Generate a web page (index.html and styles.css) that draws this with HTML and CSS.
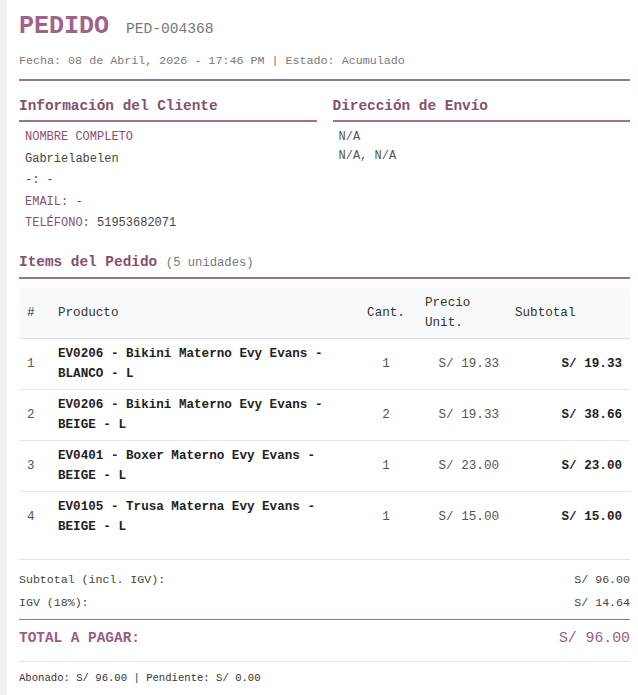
FILE: index.html
```html
<!DOCTYPE html>
<html lang="es">
<head>
<meta charset="utf-8">
<title>Pedido PED-004368</title>
<link rel="stylesheet" href="styles.css">
</head>
<body>
<div class="page">
  <header class="doc-header">
    <div class="title-row">
      <span class="title">PEDIDO</span>
      <span class="code">PED-004368</span>
    </div>
    <div class="meta">Fecha: 08 de Abril, 2026 - 17:46 PM | Estado: Acumulado</div>
  </header>

  <section class="two-cols">
    <div class="col">
      <h2 class="sec-title">Información del Cliente</h2>
      <div class="info">
        <div class="info-row label">NOMBRE COMPLETO</div>
        <div class="info-row">Gabrielabelen</div>
        <div class="info-row muted">-: -</div>
        <div class="info-row"><span class="label">EMAIL:</span> <span class="muted">-</span></div>
        <div class="info-row"><span class="label">TELÉFONO:</span> 51953682071</div>
      </div>
    </div>
    <div class="col">
      <h2 class="sec-title">Dirección de Envío</h2>
      <div class="addr">
        <div class="addr-row">N/A</div>
        <div class="addr-row">N/A, N/A</div>
      </div>
    </div>
  </section>

  <h2 class="sec-title items-title">Items del Pedido <span class="units">(5 unidades)</span></h2>

  <table class="items">
    <colgroup>
      <col class="c-num">
      <col class="c-prod">
      <col class="c-qty">
      <col class="c-price">
      <col class="c-sub">
    </colgroup>
    <thead>
      <tr>
        <th class="t-left">#</th>
        <th class="t-left">Producto</th>
        <th class="t-center">Cant.</th>
        <th class="t-left">Precio Unit.</th>
        <th class="t-left">Subtotal</th>
      </tr>
    </thead>
    <tbody>
      <tr>
        <td class="num">1</td>
        <td class="prod">EV0206 - Bikini Materno Evy Evans - BLANCO - L</td>
        <td class="qty">1</td>
        <td class="price">S/ 19.33</td>
        <td class="sub">S/ 19.33</td>
      </tr>
      <tr>
        <td class="num">2</td>
        <td class="prod">EV0206 - Bikini Materno Evy Evans - BEIGE - L</td>
        <td class="qty">2</td>
        <td class="price">S/ 19.33</td>
        <td class="sub">S/ 38.66</td>
      </tr>
      <tr>
        <td class="num">3</td>
        <td class="prod">EV0401 - Boxer Materno Evy Evans - BEIGE - L</td>
        <td class="qty">1</td>
        <td class="price">S/ 23.00</td>
        <td class="sub">S/ 23.00</td>
      </tr>
      <tr>
        <td class="num">4</td>
        <td class="prod">EV0105 - Trusa Materna Evy Evans - BEIGE - L</td>
        <td class="qty">1</td>
        <td class="price">S/ 15.00</td>
        <td class="sub">S/ 15.00</td>
      </tr>
    </tbody>
  </table>

  <section class="totals">
    <div class="t-row"><span>Subtotal (incl. IGV):</span><span>S/ 96.00</span></div>
    <div class="t-row"><span>IGV (18%):</span><span>S/ 14.64</span></div>
    <div class="t-total"><span class="t-total-label">TOTAL A PAGAR:</span><span class="t-total-value">S/ 96.00</span></div>
  </section>

  <div class="payment">Abonado: S/ 96.00 | Pendiente: S/ 0.00</div>
</div>
</body>
</html>
```

FILE: styles.css
```css
* { box-sizing: border-box; }

html, body {
  margin: 0;
  padding: 0;
}

body {
  background: #f1f1f1;
  font-family: "Courier New", "Nimbus Mono PS", "Nimbus Mono L", "FreeMono", "Liberation Mono", monospace;
  color: #333;
}

.page {
  margin-left: 7px;
  min-height: 100vh;
  background: #fff;
  padding: 12px 8px 0 12px;
}

/* Header */
.doc-header {
  border-bottom: 2px solid #a0718f;
  padding-bottom: 10px;
}

.title-row {
  height: 30px;
  line-height: 30px;
  display: flex;
  align-items: baseline;
  gap: 17px;
}

.title {
  font-size: 25px;
  font-weight: bold;
  color: #a0628a;
}

.code {
  font-size: 14.6px;
  color: #777;
}

.meta {
  margin-top: 11px;
  font-size: 11.7px;
  line-height: 16px;
  color: #7a7a7a;
}

/* Section titles */
.sec-title {
  margin: 0;
  font-size: 14.4px;
  line-height: 18px;
  font-weight: bold;
  color: #864f6f;
  padding-bottom: 5px;
  border-bottom: 2px solid #a0718f;
}

.two-cols {
  margin-top: 16px;
  display: grid;
  grid-template-columns: 1fr 1fr;
  column-gap: 16px;
}

.info {
  padding: 5px 0 0 6px;
  font-size: 12px;
  color: #444;
}

.info-row {
  line-height: 21.5px;
}

.label {
  color: #8a4f70;
}

.muted {
  color: #555;
}

.addr {
  padding: 6px 0 0 6px;
  font-size: 12px;
  color: #555;
}

.addr-row {
  line-height: 19px;
}

.items-title {
  margin-top: 18px;
}

.units {
  font-size: 12.2px;
  font-weight: normal;
  color: #777;
}

/* Table */
.items {
  width: 100%;
  margin-top: 9px;
  border-collapse: collapse;
  table-layout: fixed;
  font-size: 12.6px;
}

.c-num { width: 31px; }
.c-qty { width: 62px; }
.c-price { width: 90px; }
.c-sub { width: 123px; }

.items thead tr {
  background: #f8f9fa;
}

.items th {
  height: 51px;
  padding: 5px 8px;
  font-weight: normal;
  color: #333;
  line-height: 20px;
  border-bottom: 1px solid #e1e1e1;
  vertical-align: middle;
}

.t-left { text-align: left; }
.t-center { text-align: center; }

.items td {
  height: 51px;
  padding: 5px 8px;
  line-height: 20px;
  vertical-align: middle;
  border-bottom: 1px solid #e8e8e8;
}

.items tbody tr:last-child td {
  border-bottom: none;
  height: 51px;
}

.num { color: #555; }

.prod {
  font-weight: bold;
  color: #222;
}

.qty {
  text-align: center;
  color: #555;
}

.price {
  text-align: right;
  color: #555;
}

.sub {
  text-align: right;
  font-weight: bold;
  color: #222;
}

/* Totals */
.totals {
  margin-top: 16px;
  border-top: 1px solid #e3e3e3;
  padding-top: 8px;
  font-size: 11.6px;
  color: #444;
}

.t-row {
  display: flex;
  justify-content: space-between;
  line-height: 23px;
}

.t-total {
  margin-top: 5px;
  border-top: 1px solid #a0718f;
  border-bottom: 1px solid #e3e3e3;
  padding: 6px 0 11px;
  display: flex;
  justify-content: space-between;
  align-items: baseline;
  line-height: 24px;
  color: #9a5d84;
}

.t-total-label {
  font-size: 14.4px;
  font-weight: bold;
}

.t-total-value {
  font-size: 14.8px;
}

.payment {
  padding-top: 8px;
  line-height: 16px;
  font-size: 10.6px;
  color: #333;
}
```
